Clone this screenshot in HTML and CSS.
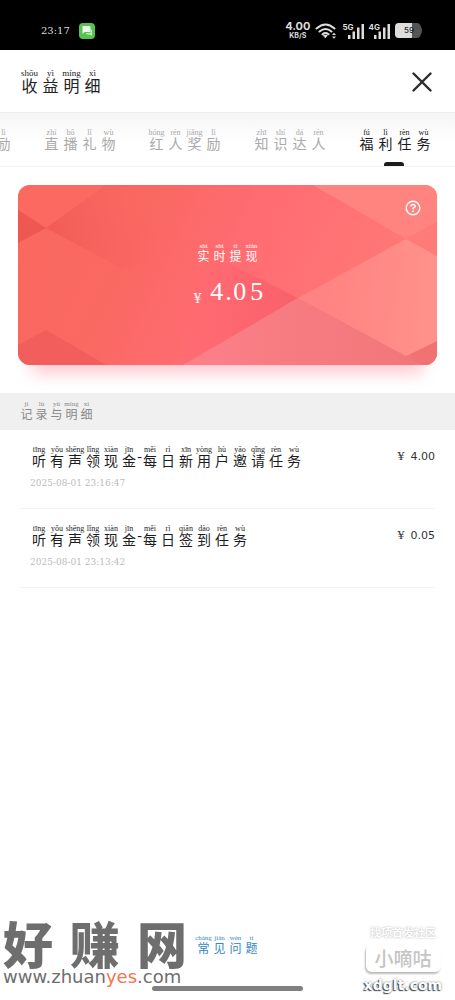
FILE: index.html
```html
<!DOCTYPE html>
<html lang="zh-CN">
<head>
<meta charset="utf-8">
<meta name="viewport" content="width=device-width, initial-scale=1">
<title>收益明细</title>
<link rel="stylesheet" href="styles.css">
</head>
<body>
<div class="app">
  <div class="status">
    <span class="clock">23:17</span>
    <svg class="msg" viewBox="0 0 16 16"><rect width="16" height="16" rx="4" fill="#58c152"/><path d="M3.500 3h7a1 1 0 0 1 1 1v4a1 1 0 0 1-1 1H5.500L3.500 11z" fill="#e9fbe6"/><path d="M7 10h4.500V6.500h.5a1 1 0 0 1 1 1V13l-2-1.500H8a1 1 0 0 1-1-1z" fill="#c3efbe"/></svg>
    <div class="net">
      <span class="speed"><b>4.00</b><small>KB/S</small></span>
      <svg class="wifi" viewBox="0 0 22 16" fill="none" stroke="#ddd" stroke-width="2" stroke-linecap="round"><path d="M1.500 5.500Q10.500-2.500 19.500 5.500M4.500 8.500q6-5 12 0M7.500 11.300q3-2.300 6 0"/><path d="M8.800 12.500h3.400L10.500 14.500z" fill="#ddd" stroke-width="1"/><path d="M17 12l2-2.300 2 2.300zM17 13.500l2 2.300 2-2.300z" fill="#ddd" stroke="none"/></svg>
      <span class="signal"><small>5G</small><svg viewBox="0 0 16 16" fill="#ddd"><path d="M0 12h2.500v4H0zM4.500 8.500H7V16H4.500zM9 4.500h2.500V16H9zM13.500 1H16v15h-2.500z"/></svg></span>
      <span class="signal"><small>4G</small><svg viewBox="0 0 16 16" fill="#ddd"><path d="M0 12h2.500v4H0zM4.500 8.500H7V16H4.500zM9 4.500h2.500V16H9zM13.500 1H16v15h-2.500z"/></svg></span>
      <span class="battery"><svg viewBox="0 0 28 15"><path d="M4 0h18q3 0 4 4 2 3.500 0 7-1 4-4 4H4q-4 0-4-4V4q0-4 4-4z" fill="#555"/><path d="M4 0h13v15H4q-4 0-4-4V4q0-4 4-4z" fill="#ddd"/></svg><b>59</b></span>
    </div>
  </div>

  <header class="head">
    <h1 class="py py-title"><ruby>收<rt>shōu</rt></ruby><ruby>益<rt>yì</rt></ruby><ruby>明<rt>míng</rt></ruby><ruby>细<rt>xì</rt></ruby></h1>
    <button class="close" aria-label="关闭"><svg viewBox="0 0 20 20" fill="none" stroke="#2c2c2e" stroke-width="2.400" stroke-linecap="round"><path d="M1.500 1.500l17 17M18.500 1.500l-17 17"/></svg></button>
  </header>

  <nav class="tabs">
    <button class="tab py"><ruby>励<rt>lì</rt></ruby></button>
    <button class="tab py"><ruby>直<rt>zhí</rt></ruby><ruby>播<rt>bō</rt></ruby><ruby>礼<rt>lǐ</rt></ruby><ruby>物<rt>wù</rt></ruby></button>
    <button class="tab py"><ruby>红<rt>hóng</rt></ruby><ruby>人<rt>rén</rt></ruby><ruby>奖<rt>jiǎng</rt></ruby><ruby>励<rt>lì</rt></ruby></button>
    <button class="tab py"><ruby>知<rt>zhī</rt></ruby><ruby>识<rt>shí</rt></ruby><ruby>达<rt>dá</rt></ruby><ruby>人<rt>rén</rt></ruby></button>
    <button class="tab py active"><ruby>福<rt>fú</rt></ruby><ruby>利<rt>lì</rt></ruby><ruby>任<rt>rèn</rt></ruby><ruby>务<rt>wù</rt></ruby></button>
  </nav>

  <main>
    <section class="card">
      <svg class="facets" viewBox="0 0 419 180" preserveAspectRatio="none">
        <defs>
          <linearGradient id="base" x1="0" y1=".4" x2="1" y2=".6"><stop offset="0" stop-color="#f9695f"/><stop offset=".25" stop-color="#fa6862"/><stop offset=".5" stop-color="#ff6c72"/><stop offset="1" stop-color="#ff7b78"/></linearGradient>
          <linearGradient id="band" x1="28" y1="20" x2="130" y2="0" gradientUnits="userSpaceOnUse"><stop offset="0" stop-color="#ec5350" stop-opacity=".6"/><stop offset="1" stop-color="#f96265" stop-opacity="0"/></linearGradient>
          <linearGradient id="mid" x1="170" y1="100" x2="290" y2="110" gradientUnits="userSpaceOnUse"><stop offset="0" stop-color="#fd6070" stop-opacity="0"/><stop offset=".5" stop-color="#fa5c69" stop-opacity=".5"/><stop offset="1" stop-color="#f35a62" stop-opacity=".75"/></linearGradient>
          <linearGradient id="low" x1="165" y1="0" x2="400" y2="0" gradientUnits="userSpaceOnUse"><stop offset="0" stop-color="#fb8088"/><stop offset="1" stop-color="#f2777a"/></linearGradient>
          <linearGradient id="light" x1="419" y1="90" x2="310" y2="80" gradientUnits="userSpaceOnUse"><stop offset="0" stop-color="#ff918b"/><stop offset="1" stop-color="#ff8382"/></linearGradient>
        </defs>
        <path fill="url(#base)" d="M0 0h419v180H0z"/>
        <path fill="#fc6a63" opacity=".7" d="M0 0h88L28 43 0 25z"/>
        <path fill="#ef5753" d="M0 25l28 18L0 58z"/>
        <path fill="url(#band)" d="M88 0L28 43l75 40 87-20V0z"/>
        <path fill="#ee5b59" opacity=".75" d="M0 160l28-15 60 35H0z"/>
        <path fill="url(#mid)" d="M125 120l85-42 70 35-115 67h-60z"/>
        <path fill="#ff8480" d="M295 0h124v37l-31 17z"/>
        <path fill="#ff7b79" d="M419 37v34l-31-17z"/>
        <path fill="url(#low)" d="M165 180l115-67 108 58 31-15v24z"/>
        <path fill="#f0706f" opacity=".7" d="M419 156v24h-15l-16-9z"/>
        <path fill="url(#light)" d="M280 113L388 54l31 17v85l-31 15z"/>
      </svg>
      <button class="help" aria-label="帮助"><svg viewBox="0 0 16 16" fill="none" stroke="#fff" stroke-width="1.400"><circle cx="8" cy="8" r="6.800"/><path d="M5.800 6.400Q6 4.400 8 4.400t2.200 1.900Q10.200 7.500 8 8.300v1" stroke-width="1.500"/><path d="M8 10.500v1.600" stroke-width="1.600"/></svg></button>
      <div class="py py-card"><ruby>实<rt>shí</rt></ruby><ruby>时<rt>shí</rt></ruby><ruby>提<rt>tí</rt></ruby><ruby>现<rt>xiàn</rt></ruby></div>
      <div class="total"><small>¥</small><strong><i>4</i><i class="dot">.</i><i>0</i><i>5</i></strong></div>
    </section>

    <h2 class="bar py py-bar"><ruby>记<rt>jì</rt></ruby><ruby>录<rt>lù</rt></ruby><ruby>与<rt>yǔ</rt></ruby><ruby>明<rt>míng</rt></ruby><ruby>细<rt>xì</rt></ruby></h2>

    <ul class="list">
      <li class="row">
        <div>
          <div class="py py-row"><ruby>听<rt>tīng</rt></ruby><ruby>有<rt>yǒu</rt></ruby><ruby>声<rt>shēng</rt></ruby><ruby>领<rt>lǐng</rt></ruby><ruby>现<rt>xiàn</rt></ruby><ruby>金<rt>jīn</rt></ruby><span class="dash">-</span><ruby>每<rt>měi</rt></ruby><ruby>日<rt>rì</rt></ruby><ruby>新<rt>xīn</rt></ruby><ruby>用<rt>yòng</rt></ruby><ruby>户<rt>hù</rt></ruby><ruby>邀<rt>yāo</rt></ruby><ruby>请<rt>qǐng</rt></ruby><ruby>任<rt>rèn</rt></ruby><ruby>务<rt>wù</rt></ruby></div>
          <time>2025-08-01 23:16:47</time>
        </div>
        <span class="amount"><b>¥</b>4.00</span>
      </li>
      <li class="row">
        <div>
          <div class="py py-row"><ruby>听<rt>tīng</rt></ruby><ruby>有<rt>yǒu</rt></ruby><ruby>声<rt>shēng</rt></ruby><ruby>领<rt>lǐng</rt></ruby><ruby>现<rt>xiàn</rt></ruby><ruby>金<rt>jīn</rt></ruby><span class="dash">-</span><ruby>每<rt>měi</rt></ruby><ruby>日<rt>rì</rt></ruby><ruby>签<rt>qiān</rt></ruby><ruby>到<rt>dào</rt></ruby><ruby>任<rt>rèn</rt></ruby><ruby>务<rt>wù</rt></ruby></div>
          <time>2025-08-01 23:13:42</time>
        </div>
        <span class="amount"><b>¥</b>0.05</span>
      </li>
    </ul>
  </main>

  <footer class="foot">
    <a class="py py-link" href="#faq"><ruby>常<rt>cháng</rt></ruby><ruby>见<rt>jiàn</rt></ruby><ruby>问<rt>wèn</rt></ruby><ruby>题<rt>tí</rt></ruby></a>
    <div class="home"></div>
  </footer>

  <div class="mark-left">
    <div class="brand"><span>好</span><span>赚</span><span>网</span></div>
    <div class="site">www.zhuan<em>yes</em>.com</div>
  </div>
  <div class="mark-right">
    <div class="slogan">找项首发社区</div>
    <div class="plate">小嘀咕</div>
    <div class="domain">xdglt.com</div>
  </div>
</div>
</body>
</html>
```
FILE: styles.css
```css
* { box-sizing: border-box; }
body { margin: 0; background: #fff; color: #222; font-family: "Liberation Serif", "Noto Sans CJK SC", serif; }
button { border: 0; padding: 0; background: none; color: inherit; font: inherit; cursor: pointer; }
svg { display: block; }
.app { position: relative; min-height: 100vh; display: flex; flex-direction: column; overflow: hidden; }

/* characters with pinyin above */
.py { --cell: 18px; display: flex; margin: 0; font-weight: 400; font-size: 14px; line-height: 16px; }
.py ruby { display: flex; flex-direction: column-reverse; align-items: center; width: var(--cell); }
.py rt { display: block; font-size: 8px; line-height: 9px; white-space: nowrap; }

.status { display: flex; align-items: center; height: 50px; padding: 11px 32px 0 41px; background: #000; color: #ddd; }
.clock { font: 10px "DejaVu Serif", serif; }
.msg { width: 16px; height: 16px; margin-left: 9px; }
.net { display: flex; align-items: center; gap: 5px; margin-left: auto; font-family: Inter, sans-serif; }
.speed { display: flex; flex-direction: column; align-items: center; font-size: 11px; line-height: 11px; }
.speed small { font-size: 7px; line-height: 8px; font-weight: 700; }
.wifi { width: 22px; height: 16px; }
.signal { display: flex; align-items: flex-start; }
.signal small { font-size: 8px; line-height: 8px; font-weight: 700; margin-right: -6px; }
.signal svg { width: 16px; height: 16px; }
.battery { position: relative; }
.battery svg { width: 28px; height: 15px; }
.battery b { position: absolute; inset: 0; text-align: center; font-size: 8px; line-height: 15px; font-weight: 500; color: #222; }

.head { display: flex; justify-content: space-between; align-items: center; height: 62px; padding: 2px 23px 0 19px; }
.py-title { --cell: 21px; font-size: 16px; line-height: 18px; }
.py-title rt { font-size: 9px; line-height: 9px; }
.close svg { width: 20px; height: 20px; }

.tabs { display: flex; justify-content: flex-end; gap: 29px; height: 55px; padding: 0 22px; border-top: 1px solid #eee; border-bottom: 1px solid #f1f1f1; background: linear-gradient(#f6f6f6, #fff 60%); }
.tab { --cell: 19px; flex: none; padding-top: 15px; align-items: flex-start; color: #aaa; }
.tab.active { position: relative; color: #1c1c1e; }
.tab.active::after { content: ""; position: absolute; bottom: 0; left: 50%; width: 20px; height: 4px; margin-left: -11px; border-radius: 3px 3px 0 0; background: #1c1c1e; }

.card { position: relative; display: flex; flex-direction: column; align-items: center; height: 180px; margin: 18px 18px 28px; padding-top: 58px; border-radius: 12px; color: #fff; box-shadow: 0 22px 16px -14px #ffc6cf; }
.facets { position: absolute; inset: 0; width: 100%; height: 100%; border-radius: 12px; }
.card > div { position: relative; }
.help { position: absolute; top: 15px; right: 16px; }
.help svg { width: 16px; height: 16px; }
.py-card { --cell: 16px; font-size: 12px; line-height: 14px; }
.py-card rt, .py-bar rt, .py-link rt { font-size: 7px; line-height: 7px; }
.total { display: flex; align-items: flex-end; gap: 7px; margin-top: 12px; padding-left: 4px; }
.total small { font: 12px/18px "DejaVu Serif", serif; }
.total strong { display: flex; font: 26px/32px "Liberation Serif", serif; }
.total i { width: 17px; font-style: normal; text-align: center; }
.total .dot { width: 6px; }

.bar { --cell: 15px; align-items: center; height: 37px; padding-left: 19px; background: #f0f0f0; color: #888; font-size: 12px; line-height: 14px; }
.list { margin: 0; padding: 0 20px; list-style: none; }
.row { display: flex; justify-content: space-between; align-items: flex-start; height: 79px; padding: 15px 0 0 10px; border-bottom: 1px solid #f3f3f3; }
.py-row { color: #1c1c1e; }
.py-row .dash { display: flex; justify-content: center; width: 3px; padding-top: 4px; }
time { display: block; margin-top: 7px; font: 9px/13px "DejaVu Serif", serif; color: #bbb; }
.amount { display: flex; gap: 6px; font: 11px/24px "DejaVu Sans", sans-serif; color: #333; }
.amount b { font-family: "DejaVu Serif", serif; font-weight: 400; }

.foot { display: flex; flex-direction: column; align-items: center; gap: 30px; margin-top: auto; padding-bottom: 9px; }
.py-link { --cell: 16px; font-size: 12px; line-height: 14px; color: #3388c4; text-decoration: none; }
.home { width: 151px; height: 5px; border-radius: 3px; background: #808080; }

.mark-left { position: absolute; left: 3px; bottom: 14px; width: 184px; color: #6e6e6e; }
.brand { display: flex; justify-content: space-between; font: 900 50px/52px "Noto Sans CJK SC", sans-serif; }
.site { font: 18px/18px "DejaVu Sans", sans-serif; }
.site em { font-style: normal; color: #f4754f; }
.mark-right { position: absolute; right: 11px; bottom: 6px; display: flex; flex-direction: column; align-items: center; width: 82px; font-family: "Noto Sans CJK SC", sans-serif; color: #fff; }
.slogan { font-size: 11px; line-height: 14px; font-weight: 700; text-shadow: 0 0 2px #aaa; }
.plate { width: 75px; margin-top: 5px; border-radius: 6px; text-align: center; font-size: 19px; line-height: 28px; font-weight: 500; color: #c4c4c4; box-shadow: -1px 2px 2px #bbb; }
.domain { margin-top: 4px; font: 700 14px/18px "DejaVu Sans", sans-serif; text-shadow: -1px 1px 1px #444, 0 0 2px #666; }
```
